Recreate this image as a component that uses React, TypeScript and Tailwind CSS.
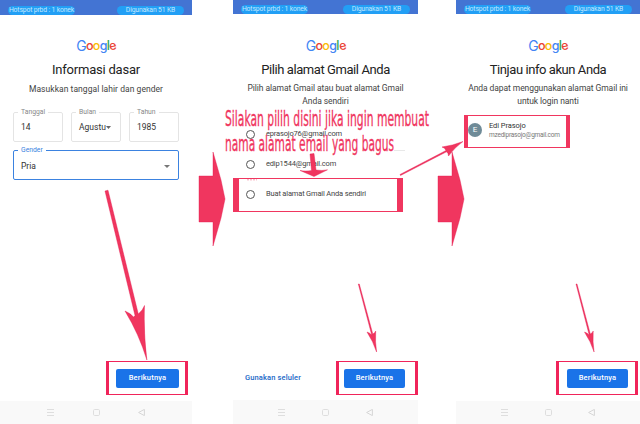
import React from "react";
import type { ReactNode } from "react";

function StatusBar({ className }: { className: string }) {
  return (
    <div className={`flex shrink-0 items-end justify-between bg-[#4374d3] pl-2 pr-2 text-[6.8px] tracking-[-0.15px] text-[#c2e8ff] ${className}`}>
      <span className="flex h-[9px] w-[67px] items-center justify-center whitespace-nowrap rounded-full bg-[#229ff5]">Hotspot prbd : 1 konek</span>
      <span className="flex h-[9px] w-[67px] items-center justify-center whitespace-nowrap rounded-full bg-[#229ff5]">Digunakan 51 KB</span>
    </div>
  );
}

function Logo() {
  return (
    <div className="flex h-4 items-center justify-center font-['Inter',sans-serif] text-[12.5px] leading-4 tracking-[-0.75px]">
      <span className="text-[14px] text-[#4285f4]">G</span>
      <span className="font-medium text-[#ea4335]">o</span>
      <span className="font-medium text-[#fbbc05]">o</span>
      <span className="font-medium text-[#4285f4]">g</span>
      <span className="font-medium text-[#34a853]">l</span>
      <span className="inline-block -rotate-12 font-medium text-[#ea4335]">e</span>
    </div>
  );
}

function NavBar({ className }: { className: string }) {
  return (
    <div className={`flex shrink-0 items-center justify-between bg-[#f9f9f9] ${className}`}>
      <svg width="7" height="7" viewBox="0 0 7 7" fill="none" stroke="#dedede"><path d="M0 .5h7M0 3.5h7M0 6.5h7" /></svg>
      <svg width="7" height="7" viewBox="0 0 7 7" fill="none" stroke="#dedede"><rect x=".5" y=".5" width="6" height="6" rx="1.2" /></svg>
      <svg width="7" height="7" viewBox="0 0 7 7" fill="none" stroke="#d6d6d6"><path d="M6.4.4v6.2L.6 3.5z" /></svg>
    </div>
  );
}

function NextButton({ className }: { className: string }) {
  return (
    <div className={`flex h-[34px] w-[82px] items-center border-x-[3px] border-y border-[#f0245a] ${className}`}>
      <button className="h-[19px] grow rounded-[2px] bg-[#1a73e8] text-[7.5px] font-medium tracking-[0.2px] text-white">Berikutnya</button>
    </div>
  );
}

function Field({ label, value, arrow }: { label: string; value: string; arrow?: boolean }) {
  return (
    <fieldset className="h-[34px] w-[50px] rounded-[2px] border border-[#e4e4e4] pl-[7px]">
      <legend className="-ml-[3px] h-[9px] px-[3px] text-[6.8px] leading-[9px] text-[#888]">{label}</legend>
      <div className="flex items-center whitespace-nowrap pt-[4px] text-[8.5px] leading-[12px] text-[#333]">
        {value}
        {arrow && <svg className="shrink-0" width="5" height="3" viewBox="0 0 5 3"><path d="M0 0h5L2.5 3z" fill="#666" /></svg>}
      </div>
    </fieldset>
  );
}

function Option({ children }: { children: ReactNode }) {
  return (
    <div className="flex h-[30px] items-center gap-[11px] pl-[13px] text-[7.5px] tracking-[-0.17px] text-[#444]">
      <span className="size-[9px] rounded-full border border-[#555]" />
      <span className="whitespace-nowrap">{children}</span>
    </div>
  );
}

function Heading({ children, className }: { children: ReactNode; className: string }) {
  return <h1 className={`mt-[7px] whitespace-nowrap text-center text-[13px] leading-[18px] text-[#222] ${className}`}>{children}</h1>;
}

function BirthScreen() {
  return (
    <section className="flex w-48 flex-col">
      <StatusBar className="h-[15px]" />
      <div className="grow pt-[23px]">
        <Logo />
        <Heading className="tracking-[-0.22px]">Informasi dasar</Heading>
        <p className="mt-1 text-center text-[8.5px] leading-[12px] tracking-[0.05px] text-[#444]">Masukkan tanggal lahir dan gender</p>
        <div className="mt-[13px] flex gap-2 pl-[13px]">
          <Field label="Tanggal" value="14" />
          <Field label="Bulan" value="Agustu" arrow />
          <Field label="Tahun" value="1985" />
        </div>
        <fieldset className="ml-[13px] mt-[4px] h-[34px] w-[166px] rounded-[2px] border border-[#3b82e0] pl-[7px]">
          <legend className="-ml-[3px] h-[9px] px-[3px] text-[6.8px] leading-[9px] text-[#3b82e0]">Gender</legend>
          <div className="flex items-center justify-between pr-[8px] pt-[5px] text-[8.5px] leading-[12px] text-[#333]">
            Pria
            <svg width="6" height="3" viewBox="0 0 6 3"><path d="M0 0h6L3 3z" fill="#777" /></svg>
          </div>
        </fieldset>
      </div>
      <NextButton className="mb-[6px] ml-[106px] pl-[7px] pr-[6px]" />
      <NavBar className="h-[23px] pl-[47px] pr-[47px]" />
    </section>
  );
}

function AddressScreen() {
  return (
    <section className="ml-[41px] flex w-[185px] flex-col">
      <StatusBar className="h-[14px]" />
      <div className="grow pt-[24px]">
        <Logo />
        <Heading className="tracking-[-0.42px]">Pilih alamat Gmail Anda</Heading>
        <p className="mt-[3px] text-center text-[8.5px] leading-[13px] tracking-[-0.07px] text-[#444]">Pilih alamat Gmail atau buat alamat Gmail<br />Anda sendiri</p>
        <div className="mt-[11px]">
          <Option>eprasojo76@gmail.com</Option>
          <Option>edip1544@gmail.com</Option>
          <div className="-mt-px h-[34px] w-[170px] border-x-[6px] border-y border-[#f0365f]">
            <div className="-ml-[6px]"><Option>Buat alamat Gmail Anda sendiri</Option></div>
          </div>
        </div>
      </div>
      <div className="mb-[5px] flex items-center justify-between">
        <span className="pl-3 text-[7.5px] font-medium tracking-[0.13px] text-[#1a68c7]">Gunakan seluler</span>
        <NextButton className="pl-[5px] pr-[10px]" />
      </div>
      <NavBar className="h-[24px] pl-[45px] pr-[45px]" />
    </section>
  );
}

function ReviewScreen() {
  return (
    <section className="ml-[38px] flex w-[184px] flex-col">
      <StatusBar className="h-[14px]" />
      <div className="grow pt-[24px]">
        <Logo />
        <Heading className="tracking-[-0.43px]">Tinjau info akun Anda</Heading>
        <p className="mt-[3px] text-center text-[8.5px] leading-[13px] tracking-[-0.08px] text-[#444]">Anda dapat menggunakan alamat Gmail ini<br />untuk login nanti</p>
        <div className="ml-2 mt-[7px] flex h-[33px] w-[106px] items-center border-x-4 border-y border-[#f0365f]">
          <span className="-mt-[3px] flex size-[14px] shrink-0 items-center justify-center rounded-full bg-[#6f8b98] text-[8px] leading-none text-white">E</span>
          <div className="flex flex-col gap-px pb-[3px] pl-[7px]">
            <div className="text-[7.5px] leading-[9px] tracking-[-0.08px] text-[#333]">Edi Prasojo</div>
            <div className="text-[6.5px] leading-[9px] tracking-[-0.22px] text-[#777]">mzediprasojo@gmail.com</div>
          </div>
        </div>
      </div>
      <NextButton className="mb-[6px] ml-[100px] pl-[8px] pr-[7px]" />
      <NavBar className="h-[23px] pl-[45px] pr-[45px]" />
    </section>
  );
}

function Annotations() {
  return (
    <svg className="pointer-events-none absolute left-0 top-0" width="640" height="424" viewBox="0 0 640 424" fill="#f0365f" stroke="#e2144c" strokeWidth=".4">
      <path d="M394 150.500h11" stroke="#e8e8e8" strokeWidth="1" />
      <path d="M247 179.800h10" stroke="#f48aa2" strokeDasharray="2 1" strokeWidth=".8" />
      <path d="M199 176h14v-24l8 28l4 19l-4 19l-8 28v-24h-14z" />
      <path d="M438 176h14v-24l8 28l4 19l-4 19l-8 28v-24h-14z" />
      <path d="M105 191l3-.8L138.300 314Q143 310 144.500 305.500Q143.500 334 146.900 360Q139 334 125 311Q130 313 133.500 317L135 315.500z" />
      <path d="M310 154l4-.5L316 170q6 1 11.500-.2L314 176.500L300 170.500q6 1 11.500 0z" />
      <path d="M400 174.500L446 150.500Q445 147.500 442 147Q453 145.500 463 141.500Q455 147 448.500 156Q448.500 153 446.500 151.800L400.500 175.500z" />
      <path d="M358.300 284h1L372.800 334Q375 333 375.700 331Q375 342 376.600 352Q373 341 367 332Q370 333 371.700 335z" />
      <path d="M576 284h1L590.300 334Q592.500 333 593.200 331Q592.500 342 594.100 352Q590.500 341 584.500 332Q587.500 333 589.200 335z" />
      <g stroke="#f0365f" strokeWidth=".35" fontFamily="'DejaVu Sans', sans-serif" fontSize="21">
        <text x="225" y="126" textLength="204" lengthAdjust="spacingAndGlyphs">Silakan pilih disini jika ingin membuat</text>
        <text x="225" y="150.500" textLength="169" lengthAdjust="spacingAndGlyphs">nama alamat email yang bagus</text>
      </g>
    </svg>
  );
}

export default function App() {
  return (
    <main className="relative flex h-[424px] w-[640px] overflow-hidden bg-white font-['Roboto',sans-serif]">
      <BirthScreen />
      <AddressScreen />
      <ReviewScreen />
      <Annotations />
    </main>
  );
}
